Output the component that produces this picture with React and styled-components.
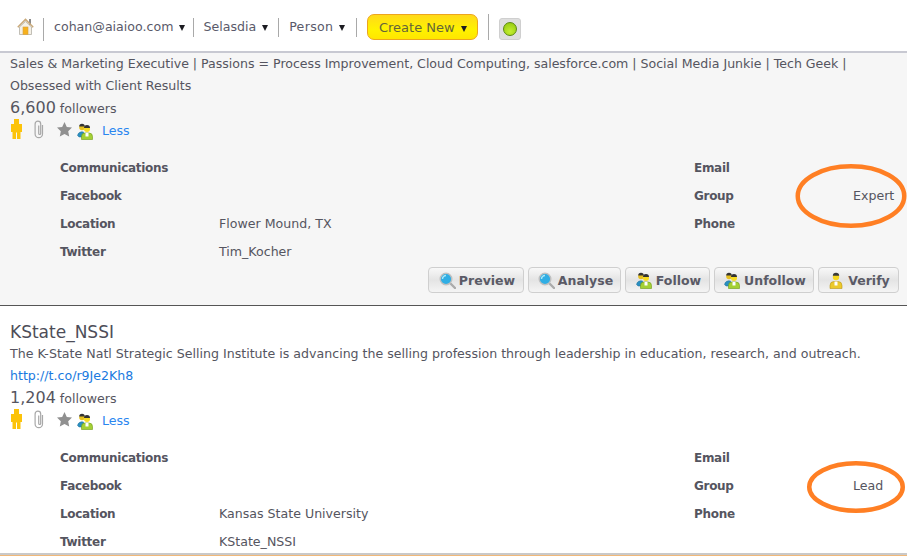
import React from "react";
import styled, { createGlobalStyle } from "styled-components";

const Global = createGlobalStyle`
  html, body { margin: 0; padding: 0; background: #fff; overflow: hidden; }
  body { width: 907px; height: 556px; font-family: "DejaVu Sans", Verdana, sans-serif; color: #555560; }
`;
const Page = styled.div`
  width: 907px; height: 556px; overflow: hidden; position: relative;
  display: flex; flex-direction: column;
`;
const Toolbar = styled.header`
  height: 53px; box-sizing: border-box; flex: none;
  border-bottom: 2px solid #c8c9d2;
  display: flex; align-items: center; padding: 3px 0 0 17px;
`;
const HomeSlot = styled.span`
  width: 17px; height: 17px; display: block; margin-right: 9px; margin-top: -2px;
`;
const NavDivider = styled.span`
  display: block; width: 1px; height: ${p => p.$h || 19}px; background: #a9a9a9; flex: none;
  margin-top: ${p => p.$mt ?? 1}px;
`;
const NavItem = styled.span`
  font-size: 12.6px; color: #5a5a6a; padding: 0 ${p => p.$r || 9}px 2px ${p => p.$l || 10}px; display: flex; align-items: center; white-space: nowrap;
  letter-spacing: ${p => p.$ls || 0}px;
`;
const Caret = styled.span`
  display: inline-block; margin-left: 6px; margin-top: 3px;
  border-left: 3.5px solid transparent; border-right: 3.5px solid transparent; border-top: 6px solid #1c1c22;
`;
const CreateButton = styled.span`
  width: 111px; height: 26px; box-sizing: border-box; margin: 0 10px;
  border: 1px solid #eda51e; border-radius: 7px;
  background: linear-gradient(#ffd91a, #fff200 60%, #ffe600);
  font-size: 13px; color: #66643a; display: flex; align-items: center; justify-content: center;
`;
const StatusTile = styled.span`
  width: 22px; height: 22px; box-sizing: border-box; margin: 4px 0 0 10px;
  border: 1px solid #cfcfcf; border-radius: 3px; background: #dedede;
  display: flex; align-items: center; justify-content: center;
`;
const StatusDot = styled.span`
  width: 14px; height: 14px; box-sizing: border-box; border-radius: 50%; border: 1px solid #5c8a10;
  background: radial-gradient(circle at 50% 70%, #c4ee30, #8fc60c);
`;
const Profile = styled.section`
  position: relative; flex: none; box-sizing: border-box;
  background: ${p => p.$shade ? "#f6f6f6" : "#fff"};
  height: ${p => p.$h}px; padding: ${p => p.$top}px 0 0 10px;
  border-bottom: ${p => p.$shade ? "1px solid #555" : "2px solid #c9c9c9"};
`;
const FootStrip = styled.div`
  height: 1px; flex: none; background: #f0b878;
`;
const Name = styled.h2`
  margin: 0; font-weight: 400; font-size: 17px; line-height: 22px; color: #4d4d58;
`;
const Bio = styled.p`
  margin: 0; font-size: 12.6px; line-height: 22px; color: #555560; white-space: pre-line;
  letter-spacing: ${p => p.$ls || 0}px;
`;
const Link = styled.a`
  font-size: 12.6px; line-height: 22px; color: #1a7ae0; display: block;
`;
const Followers = styled.div`
  font-size: 12.6px; line-height: 22px; height: 22px; color: #555560;
  & b { font-weight: 400; font-size: 16px; }
`;
const IconRow = styled.div`
  display: flex; align-items: center; height: 22px;
`;
const Less = styled.a`
  font-size: 12.6px; color: #2a86f0; margin-left: 8px;
`;
const Details = styled.div`
  display: grid; grid-template-columns: 159px 475px 159px 1fr;
  grid-auto-rows: 28px; align-items: center; margin: 12px 0 0 50px;
  font-size: 12.6px; color: #555560;
`;
const Label = styled.span`font-weight: 700; font-size: 12px; letter-spacing: -0.3px; padding-top: 2px;`;
const Value = styled.span``;
const Actions = styled.div`
  display: flex; justify-content: flex-end; gap: 4px; padding-right: 8px; margin-top: 2px;
`;
const ActionButton = styled.button`
  height: 26px; box-sizing: border-box; border: 1px solid #cfcfcf; border-radius: 4px; padding: 1px 0 0 2px;
  width: ${p => p.$w}px;
  background: linear-gradient(#f8f8f8, #e4e4e4 50%, #f4f4f4);
  display: flex; align-items: center; justify-content: center; gap: 3px;
  font-family: inherit; font-size: 12.5px; font-weight: 700; color: #5a5a66;
`;
const Ring = styled.svg`
  position: absolute; left: ${p => p.$x}px; top: ${p => p.$y}px; overflow: visible;
`;

const Home = () => (
  <svg width="17" height="17" viewBox="0 0 17 17" style={{ display: "block" }}>
    <rect x="12" y="1" width="2" height="6" fill="#8a8a8a" />
    <path d="M.8 9.200 8.500 1.500 16.200 9.200" fill="none" stroke="#c9a878" strokeWidth="1.600" />
    <path d="M2.500 9 8.500 3.500 14.500 9V16.500H2.500Z" fill="#f4f0e6" stroke="#b4b0a6" strokeWidth=".8" />
    <rect x="6" y="9" width="5" height="7.500" fill="#f6b01c" stroke="#d8a040" strokeWidth=".6" />
  </svg>
);
const Person = () => (
  <svg width="11" height="20" viewBox="0 0 11 20" style={{ margin: "-3px 11px 0 1px", flex: "none" }}>
    <path d="M3 0h5v5h3v8H9.500v7H6v-6.500H5V20H1.500v-7H0V5h3Z" fill="#fcc30a" />
  </svg>
);
const Clip = () => (
  <svg width="12" height="19" viewBox="0 0 12 19" style={{ margin: "-2px 12px 0 0", flex: "none" }}>
    <path d="M9.500 5v9a3.700 3.700 0 0 1-7.400 0V4a2.800 2.800 0 0 1 5.600 0v9.500a1 1 0 0 1-2 0V5.500" fill="none" stroke="#a8a8a8" strokeWidth="1.200" />
  </svg>
);
const Star = () => (
  <svg width="15" height="15" viewBox="0 0 15 15" style={{ margin: "-1px 5px 0 0", flex: "none" }}>
    <path d="M7.500 0 9.800 5 15 5.600 11.200 9.200 12.200 14.500 7.500 11.900 2.800 14.500 3.800 9.200 0 5.600 5.200 5Z" fill="#909090" />
  </svg>
);
const GroupGlyph = () => (
  <>
    <circle cx="5" cy="4.500" r="2.800" fill="#e6c020" />
    <path d="M2.200 3.500a2.800 2.800 0 0 1 5.600 0Z" fill="#333" />
    <path d="M.5 12.500a4.500 4.500 0 0 1 6-3.500l.5 5H2Z" fill="#2a8fc0" stroke="#1c6d98" strokeWidth=".5" />
    <circle cx="10" cy="6" r="3" fill="#f8dc20" />
    <path d="M7 5a3 3 0 0 1 6 0Z" fill="#333" />
    <path d="M4.500 16.500v-3a3.500 3.500 0 0 1 3.500-3.500h4a3.500 3.500 0 0 1 3.500 3.500v3Z" fill="#a4d034" stroke="#6f9a16" strokeWidth=".6" />
    <path d="M8.500 10h3v3.500h-3Z" fill="#fff" />
  </>
);
const Group = ({ shift = 0 }) => (
  <svg width="17" height="17" viewBox="0 0 17 17" style={{ flex: "none", marginTop: shift }}>
    <GroupGlyph />
  </svg>
);
const Lens = () => (
  <svg width="17" height="17" viewBox="0 0 17 17" style={{ flex: "none" }}>
    <path d="M11 11l5 5" stroke="#ababab" strokeWidth="2.400" strokeLinecap="round" />
    <circle cx="7" cy="7" r="5.800" fill="#30aee4" stroke="#c0c0c0" strokeWidth="1.400" />
    <path d="M3.500 7a3.500 3.500 0 0 1 3.500-3.500" stroke="#a8e8f8" strokeWidth="1.400" fill="none" />
  </svg>
);
const Badge = () => (
  <svg width="14" height="17" viewBox="0 0 14 17" style={{ flex: "none", marginRight: 2 }}>
    <circle cx="7" cy="5" r="3.200" fill="#f6d820" />
    <path d="M3.800 3.800a3.200 3 0 0 1 6.400 0Z" fill="#3a3a3a" />
    <path d="M1 16.500v-3a4 4 0 0 1 4-4h4a4 4 0 0 1 4 4v3Z" fill="#ecc92a" stroke="#b8961a" strokeWidth=".6" />
    <path d="M5.500 9.500h3v4h-3Z" fill="#fff" />
  </svg>
);

const Icons = () => (
  <IconRow>
    <Person /><Clip /><Star /><Group shift={2} /><Less>Less</Less>
  </IconRow>
);

const DetailRows = ({ location, twitter, group }) => (
  <Details>
    <Label>Communications</Label><Value /><Label>Email</Label><Value />
    <Label>Facebook</Label><Value /><Label>Group</Label><Value>{group}</Value>
    <Label>Location</Label><Value>{location}</Value><Label>Phone</Label><Value />
    <Label>Twitter</Label><Value>{twitter}</Value><Value /><Value />
  </Details>
);

export default function App() {
  return (
    <Page>
      <Global />
      <Toolbar>
        <HomeSlot><Home /></HomeSlot>
        <NavDivider $h={23} $mt={5} />
        <NavItem $r={8}>cohan@aiaioo.com<Caret /></NavItem>
        <NavDivider />
        <NavItem $l={9} $r={10}>Selasdia<Caret /></NavItem>
        <NavDivider />
        <NavItem $r={11} $ls={0.3}>Person<Caret /></NavItem>
        <NavDivider />
        <CreateButton>Create New<Caret /></CreateButton>
        <NavDivider $h={26} $mt={0} />
        <StatusTile><StatusDot /></StatusTile>
      </Toolbar>

      <Profile $shade $h={253} $top={0}>
        <Bio $ls={-0.02}>{"Sales & Marketing Executive | Passions = Process Improvement, Cloud Computing, salesforce.com | Social Media Junkie | Tech Geek |\nObsessed with Client Results"}</Bio>
        <Followers><b>6,600</b> followers</Followers>
        <Icons />
        <DetailRows location="Flower Mound, TX" twitter="Tim_Kocher" group="Expert" />
        <Actions>
          <ActionButton $w={96}><Lens />Preview</ActionButton>
          <ActionButton $w={93}><Lens />Analyse</ActionButton>
          <ActionButton $w={85}><Group />Follow</ActionButton>
          <ActionButton $w={100}><Group />Unfollow</ActionButton>
          <ActionButton $w={81}><Badge />Verify</ActionButton>
        </Actions>
        <Ring $x={794.5} $y={110} width="112" height="66" viewBox="0 0 112 66">
          <ellipse cx="56" cy="33" rx="53.250" ry="29.750" fill="none" stroke="#ff7f24" strokeWidth="4.500" />
        </Ring>
      </Profile>

      <Profile $h={249} $top={15}>
        <Name>KState_NSSI</Name>
        <Bio>The K-State Natl Strategic Selling Institute is advancing the selling profession through leadership in education, research, and outreach.</Bio>
        <Link>http://t.co/r9Je2Kh8</Link>
        <Followers><b>1,204</b> followers</Followers>
        <Icons />
        <DetailRows location="Kansas State University" twitter="KState_NSSI" group="Lead" />
        <Ring $x={806} $y={154} width="100" height="54" viewBox="0 0 100 54">
          <ellipse cx="50" cy="27" rx="46.750" ry="23.750" fill="none" stroke="#ff7f24" strokeWidth="4.500" />
        </Ring>
      </Profile>
      <FootStrip />
    </Page>
  );
}
